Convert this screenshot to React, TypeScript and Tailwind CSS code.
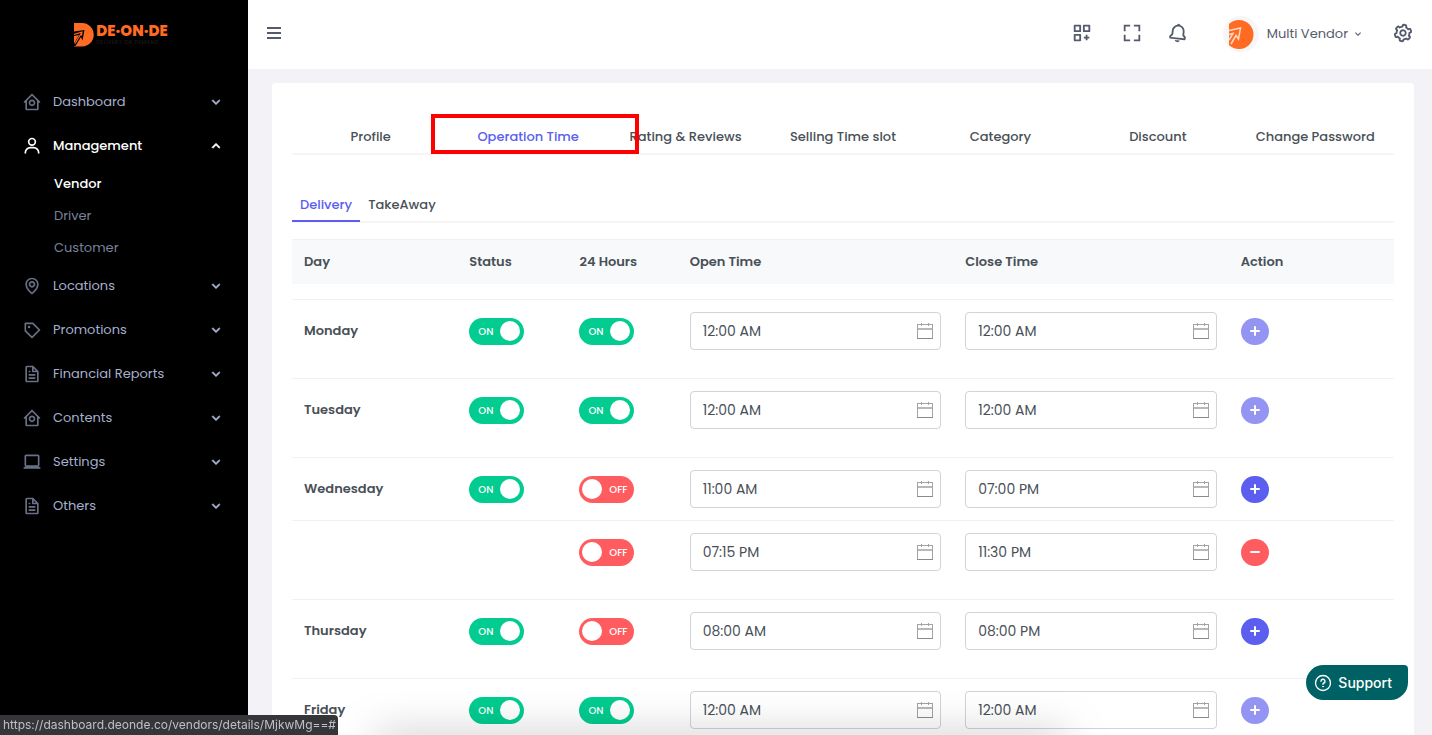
import { useState } from "react";
import type { ComponentType, SVGProps } from "react";
import {
  BiBell,
  BiCog,
  BiCustomize,
  BiFile,
  BiFullscreen,
  BiHomeCircle,
  BiLaptop,
  BiMap,
  BiPurchaseTag,
  BiUser,
} from "react-icons/bi";

type NavItem = {
  label: string;
  icon: ComponentType<{ className?: string }>;
  children?: string[];
};

type Slot = { allDay: boolean; open: string; close: string };
type Day = { name: string; enabled: boolean; slots: Slot[] };

const NAV: NavItem[] = [
  { label: "Dashboard", icon: BiHomeCircle },
  { label: "Management", icon: BiUser, children: ["Vendor", "Driver", "Customer"] },
  { label: "Locations", icon: BiMap },
  { label: "Promotions", icon: BiPurchaseTag },
  { label: "Financial Reports", icon: BiFile },
  { label: "Contents", icon: BiHomeCircle },
  { label: "Settings", icon: BiLaptop },
  { label: "Others", icon: BiFile },
];

const TABS = [
  "Profile",
  "Operation Time",
  "Rating & Reviews",
  "Selling Time slot",
  "Category",
  "Discount",
  "Change Password",
];

const COLUMNS = [
  { label: "Day", width: "w-[15%]" },
  { label: "Status", width: "w-[10%]" },
  { label: "24 Hours", width: "w-[10%]" },
  { label: "Open Time", width: "w-[25%]" },
  { label: "Close Time", width: "w-[25%]" },
  { label: "Action", width: "w-[15%]" },
];

const INITIAL_DAYS: Day[] = [
  { name: "Monday", enabled: true, slots: [{ allDay: true, open: "12:00 AM", close: "12:00 AM" }] },
  { name: "Tuesday", enabled: true, slots: [{ allDay: true, open: "12:00 AM", close: "12:00 AM" }] },
  {
    name: "Wednesday",
    enabled: true,
    slots: [
      { allDay: false, open: "11:00 AM", close: "07:00 PM" },
      { allDay: false, open: "07:15 PM", close: "11:30 PM" },
    ],
  },
  { name: "Thursday", enabled: true, slots: [{ allDay: false, open: "08:00 AM", close: "08:00 PM" }] },
  { name: "Friday", enabled: true, slots: [{ allDay: true, open: "12:00 AM", close: "12:00 AM" }] },
];

function Chevron(props: SVGProps<SVGSVGElement>) {
  return (
    <svg viewBox="0 0 24 24" fill="currentColor" aria-hidden="true" {...props}>
      <path d="M7.41 8.58 12 13.17l4.59-4.59L18 10l-6 6-6-6z" />
    </svg>
  );
}

function CalendarIcon() {
  return (
    <svg width="16" height="16" viewBox="0 0 16 16" fill="none" shapeRendering="crispEdges" aria-hidden="true">
      <path d="M1 5.500h14" stroke="#b8b8b8" strokeWidth="2" />
      <path d="M1 1.500h14M.5 1v14M15.500 1v14" stroke="#a3a3a3" />
      <path d="M0 15.500h16" stroke="#8a8a8a" />
      <path d="M4.500 0v3M11.500 0v3" stroke="#a3a3a3" />
    </svg>
  );
}

function BrandMark({ className }: { className?: string }) {
  return (
    <svg viewBox="0 0 20 24" className={className} aria-hidden="true">
      <path d="M0 0h8a11.500 11.500 0 0 1 0 23.500H0z" fill="#ff6b22" />
      <path d="M0 8.500 10.500 7 8.500 17.500 7 14 1.500 23H0v-2.500L5 12 0 13z" fill="#000" />
      <path d="M0 11.500 8 9 7.500 12.500M1 20.500 7.500 10" fill="none" stroke="#ff6b22" strokeWidth="1.200" />
    </svg>
  );
}

function Sidebar() {
  const [open, setOpen] = useState("Management");

  return (
    <aside className="w-[248px] shrink-0 bg-black text-[13px]">
      <a href="#" aria-label="De-on-de home" className="flex h-20 items-start justify-center pt-[23px] pr-1.5">
        <BrandMark className="h-6 w-5" />
        <span className="flex flex-col pl-0.5 text-[15px] leading-4 font-extrabold text-[#ff6b22]">
          DE·ON·DE
          <small className="text-[5px] leading-2 font-medium tracking-widest text-[#1c1c1c]">DELIVERY ON DEMAND</small>
        </span>
      </a>
      <nav>
        <ul>
          {NAV.map(({ label, icon: Icon, children }) => {
            const active = label === open;
            return (
              <li key={label}>
                <button
                  onClick={() => setOpen(active ? "" : label)}
                  className={`flex h-11 w-full items-center pr-6 pl-[22px] ${
                    active ? "font-medium text-white" : "text-[#a6b0cf]"
                  }`}
                >
                  <Icon className={`mr-[11px] size-5 ${active ? "text-white" : "text-[#6a7187]"}`} />
                  {label}
                  <Chevron
                    stroke="currentColor"
                    className={`ml-auto size-4 ${active ? "rotate-180" : ""}`}
                  />
                </button>
                {active && children && (
                  <ul>
                    {children.map((child) => (
                      <li key={child}>
                        <a
                          href="#"
                          className={`flex h-8 items-center pl-[54px] ${
                            child === "Vendor" ? "font-medium text-white" : "text-[#79829c]"
                          }`}
                        >
                          {child}
                        </a>
                      </li>
                    ))}
                  </ul>
                )}
              </li>
            );
          })}
        </ul>
      </nav>
    </aside>
  );
}

function Header() {
  return (
    <header className="flex h-[69px] shrink-0 items-center bg-white pr-[18px] pl-[19px] text-[#555b6d]">
      <button aria-label="Toggle menu" className="flex flex-col gap-[3px] pb-1">
        <span className="h-0.5 w-[14px] bg-current" />
        <span className="h-0.5 w-[14px] bg-current" />
        <span className="h-0.5 w-[14px] bg-current" />
      </button>
      <div className="ml-auto flex items-center">
        <button aria-label="Apps" className="mr-7 pb-1">
          <BiCustomize className="size-[22px]" />
        </button>
        <button aria-label="Full screen" className="mr-6 pb-1">
          <BiFullscreen className="size-[22px]" />
        </button>
        <button aria-label="Notifications" className="mr-[34px] pb-1">
          <BiBell className="size-[22px] rotate-6" />
        </button>
        <button className="mr-7 flex items-center pb-0.5 text-[13px]">
          <svg viewBox="0 0 36 36" className="mr-2 size-9" aria-hidden="true">
            <circle cx="18" cy="18" r="18" fill="#f6f6f6" />
            <path d="M6 8a14.500 14.500 0 1 1 0 21z" fill="#ff6b22" />
            <path
              d="M6 14.500 17.500 12 15.500 23l-2.500-3.500L8 28M6 18.500l4-1L6 24"
              fill="none"
              stroke="#ffd9c4"
              strokeWidth="1.500"
            />
          </svg>
          Multi Vendor
          <Chevron className="ml-1 size-3" />
        </button>
        <button aria-label="Settings" className="pb-1">
          <BiCog className="size-[22px] rotate-12" />
        </button>
      </div>
    </header>
  );
}

type ToggleProps = { label: string; checked: boolean; onChange: (value: boolean) => void };

function Toggle({ label, checked, onChange }: ToggleProps) {
  return (
    <label
      className={`mt-[6px] flex h-[27px] w-[55px] cursor-pointer items-center justify-between rounded-full pb-px text-[10px] font-medium text-white ${
        checked ? "bg-[#02cc90] pr-1 pl-[9px]" : "flex-row-reverse bg-[#ff5c60] pr-[7px] pl-[3px]"
      }`}
    >
      <input
        type="checkbox"
        aria-label={label}
        checked={checked}
        onChange={(e) => onChange(e.target.checked)}
        className="sr-only"
      />
      {checked ? "ON" : "OFF"}
      <span className="size-5 rounded-full bg-white" />
    </label>
  );
}

type TimeFieldProps = { label: string; value: string; onChange: (value: string) => void };

function TimeField({ label, value, onChange }: TimeFieldProps) {
  return (
    <div className="flex h-[38px] items-center rounded border border-[#ced4da] bg-white pr-[7px] pl-3">
      <input
        type="text"
        aria-label={label}
        value={value}
        onChange={(e) => onChange(e.target.value)}
        className="min-w-0 flex-1 text-sm text-[#495057] outline-none"
      />
      <CalendarIcon />
    </div>
  );
}

function OperationTable() {
  const [days, setDays] = useState<Day[]>(INITIAL_DAYS);

  const updateDay = (name: string, change: (day: Day) => Day) => {
    setDays((prev) => prev.map((day) => (day.name === name ? change(day) : day)));
  };

  const updateSlot = (name: string, index: number, patch: Partial<Slot>) => {
    updateDay(name, (day) => ({
      ...day,
      slots: day.slots.map((slot, i) => (i === index ? { ...slot, ...patch } : slot)),
    }));
  };

  const addSlot = (name: string) => {
    updateDay(name, (day) => ({
      ...day,
      slots: [...day.slots, { allDay: false, open: "12:00 AM", close: "12:00 AM" }],
    }));
  };

  const removeSlot = (name: string, index: number) => {
    updateDay(name, (day) => ({ ...day, slots: day.slots.filter((_, i) => i !== index) }));
  };

  return (
    <table className="mt-4 w-full table-fixed text-left text-[13px]">
      <thead>
        <tr className="h-11 border-t border-[#eff2f7] bg-[#f8f9fa]">
          {COLUMNS.map(({ label, width }) => (
            <th key={label} scope="col" className={`${width} px-3 font-semibold`}>
              {label}
            </th>
          ))}
        </tr>
        <tr className="h-4" />
      </thead>
      {days.map((day) => (
        <tbody key={day.name}>
          {day.slots.map((slot, i) => {
            const last = i === day.slots.length - 1;
            return (
              <tr
                key={i}
                className={`border-t border-[#eff2f7] align-top *:px-3 *:pt-3 ${last ? "*:pb-7" : "*:pb-3"}`}
              >
                <th scope="row" className="leading-[38px] font-semibold">
                  {i === 0 && day.name}
                </th>
                <td>
                  {i === 0 && (
                    <Toggle
                      label={`${day.name} status`}
                      checked={day.enabled}
                      onChange={(enabled) => updateDay(day.name, (d) => ({ ...d, enabled }))}
                    />
                  )}
                </td>
                <td>
                  <Toggle
                    label={`${day.name} 24 hours`}
                    checked={slot.allDay}
                    onChange={(allDay) => updateSlot(day.name, i, { allDay })}
                  />
                </td>
                <td>
                  <TimeField
                    label={`${day.name} open time`}
                    value={slot.open}
                    onChange={(open) => updateSlot(day.name, i, { open })}
                  />
                </td>
                <td>
                  <TimeField
                    label={`${day.name} close time`}
                    value={slot.close}
                    onChange={(close) => updateSlot(day.name, i, { close })}
                  />
                </td>
                <td>
                  <button
                    aria-label={i === 0 ? "Add slot" : "Remove slot"}
                    disabled={slot.allDay}
                    onClick={() => (i === 0 ? addSlot(day.name) : removeSlot(day.name, i))}
                    className={`mt-[6px] flex h-[27px] w-7 items-center justify-center rounded-full pb-px disabled:opacity-65 ${
                      i === 0 ? "bg-[#5b5eee]" : "bg-[#ff5c60]"
                    }`}
                  >
                    <svg width="10" height="10" viewBox="0 0 10 10" stroke="#fff" strokeWidth="2" strokeLinecap="round">
                      <path d={i === 0 ? "M1 5h8M5 1v8" : "M1 5h8"} />
                    </svg>
                  </button>
                </td>
              </tr>
            );
          })}
        </tbody>
      ))}
    </table>
  );
}

export default function App() {
  const [tab, setTab] = useState("Operation Time");
  const [mode, setMode] = useState("Delivery");

  return (
    <div className="flex h-screen overflow-hidden bg-[#f3f3f7] font-[Poppins,Inter,sans-serif] text-[#495057]">
      <Sidebar />
      <div className="flex min-w-0 flex-1 flex-col">
        <Header />
        <main className="flex-1 overflow-y-auto pt-[14px] pr-[18px] pl-6 [scrollbar-width:none]">
          <section className="rounded bg-white px-5 pt-[34px] pb-5">
            <div className="grid grid-cols-7 border-b-2 border-[#f6f6f6] text-[13px] font-medium">
              {TABS.map((label) => (
                <button
                  key={label}
                  onClick={() => setTab(label)}
                  className={`relative h-9 pt-[3px] whitespace-nowrap ${label === tab ? "text-[#5b5eee]" : ""}`}
                >
                  {label}
                  {label === "Operation Time" && (
                    <span className="pointer-events-none absolute -top-[3px] -right-8 -bottom-px -left-[18px] z-10 border-4 border-[#ff0000]" />
                  )}
                </button>
              ))}
            </div>

            <div className="mt-8 flex border-b-2 border-[#f6f6f6] text-[13px] font-medium">
              {["Delivery", "TakeAway"].map((label) => (
                <button
                  key={label}
                  onClick={() => setMode(label)}
                  className={`-mb-px h-[35px] border-b-2 px-2 pt-0.5 ${
                    label === mode ? "border-[#5b5eee] text-[#5b5eee]" : "border-transparent"
                  }`}
                >
                  {label}
                </button>
              ))}
            </div>

            <OperationTable />
          </section>
        </main>
      </div>

      <div className="pointer-events-none fixed right-[370px] bottom-0 left-[380px] shadow-[0_8px_40px_4px_rgba(0,0,0,0.6)]" />

      <button className="fixed right-6 bottom-[35px] flex h-[35px] items-center gap-1.5 rounded-[18px] rounded-tr bg-[#006164] pr-4 pl-2 font-[Inter,sans-serif] text-sm font-medium text-white">
        <svg width="18" height="18" viewBox="0 0 18 18" fill="none" stroke="currentColor" strokeLinecap="round">
          <circle cx="9" cy="9" r="7.500" strokeWidth="1.300" />
          <path d="M7 7.200a2 2 0 1 1 2.900 1.800c-.6.300-.9.600-.9 1.200" strokeWidth="1.400" />
          <circle cx="9" cy="12.600" r=".4" fill="currentColor" />
        </svg>
        Support
      </button>

      <div className="fixed bottom-0 left-0 rounded-tr bg-[#35363a] pr-0.5 pl-[3px] font-[Inter,sans-serif] text-xs leading-5 text-[#bdc1c6]">
        https://dashboard.deonde.co/vendors/details/MjkwMg==#
      </div>
    </div>
  );
}
